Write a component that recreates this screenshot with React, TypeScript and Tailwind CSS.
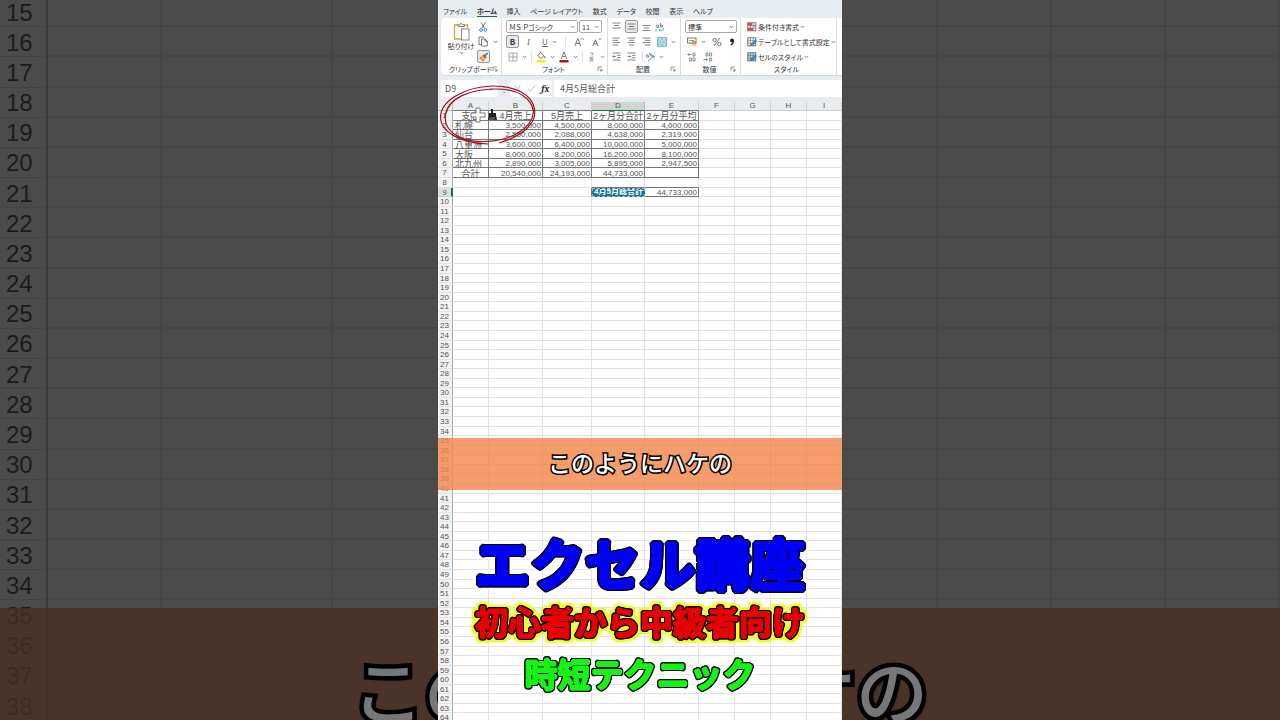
import type { ReactNode } from "react";

const GRID_COLS =
  "grid grid-cols-[15fr_36fr_54fr_49fr_53fr_54fr_36fr_36fr_36fr_35fr]";
const BACK_COLS =
  "grid grid-cols-[48fr_114fr_171fr_153fr_168fr_170fr_114fr_114fr_114fr_114fr]";

const COLUMNS = ["A", "B", "C", "D", "E", "F", "G", "H", "I"];

const DATA: Record<number, string[]> = {
  1: ["支店", "4月売上", "5月売上", "2ヶ月分合計", "2ヶ月分平均"],
  2: ["札幌", "3,500,000", "4,500,000", "8,000,000", "4,000,000"],
  3: ["仙台", "2,550,000", "2,088,000", "4,638,000", "2,319,000"],
  4: ["八重洲", "3,600,000", "6,400,000", "10,000,000", "5,000,000"],
  5: ["大阪", "8,000,000", "8,200,000", "16,200,000", "8,100,000"],
  6: ["北九州", "2,890,000", "3,005,000", "5,895,000", "2,947,500"],
  7: ["合計", "20,540,000", "24,193,000", "44,733,000", ""],
  9: ["", "", "", "4月5月総合計", "44,733,000"],
};

const TABS = ["ファイル", "ホーム", "挿入", "ページ レイアウト", "数式", "データ", "校閲", "表示", "ヘルプ"];

function range(from: number, count: number) {
  return Array.from({ length: count }, (_, i) => from + i);
}

function boxed(row: number, col: number) {
  return (row >= 1 && row <= 7 && col <= 4) || (row === 9 && (col === 3 || col === 4));
}

function cellBorder(row: number, col: number) {
  const right = boxed(row, col) || (row === 9 && col === 2);
  const bottom = boxed(row, col) || boxed(row + 1, col);
  return (
    (right ? "border-r-[#777] " : "border-r-[#e2e2e2] ") +
    (bottom ? "border-b-[#777]" : "border-b-[#e2e2e2]")
  );
}

function cellText(row: number, col: number) {
  if (row === 1 || (row === 7 && col === 0)) return "justify-center text-[9px]";
  if (col === 0) return "justify-start pl-0.5 text-[9px]";
  return "justify-end pr-px text-[8px]";
}

function Svg({ w, h, children }: { w: number; h: number; children: ReactNode }) {
  return (
    <svg width={w} height={h} viewBox={`0 0 ${w} ${h}`} fill="none" stroke="#666" strokeWidth="0.9" aria-hidden="true" className="shrink-0">
      {children}
    </svg>
  );
}

function Chevron() {
  return (
    <Svg w={5} h={4}>
      <path d="M0.8 1 L2.5 2.8 L4.2 1" strokeWidth="0.8" />
    </Svg>
  );
}

function Tool({ label, active, children }: { label: string; active?: boolean; children: ReactNode }) {
  return (
    <button
      type="button"
      aria-label={label}
      className={
        active
          ? "flex h-[13px] w-[13px] shrink-0 items-center justify-center rounded-xs border border-[#999] bg-[#e8e8e8]"
          : "flex h-[13px] shrink-0 items-center justify-center gap-1"
      }
    >
      {children}
    </button>
  );
}

function Divider() {
  return <span className="h-[10px] w-px shrink-0 bg-[#ddd]" />;
}

function Group({ label, width, launcher, children }: { label: string; width: string; launcher?: boolean; children: ReactNode }) {
  return (
    <section className={`${width} flex shrink-0 flex-col border-r border-[#ddd]`} aria-label={label}>
      <div className="h-[46px]">{children}</div>
      <div className="flex h-[10px] items-center pr-1 pl-2">
        <span className="flex-1 text-center text-[7px] leading-[10px] whitespace-nowrap">{label}</span>
        {launcher ? (
          <button type="button" aria-label={`${label}の設定`}>
            <Svg w={6} h={6}>
              <path d="M1 5 V1 H5 M2.5 2.5 L5 5 M5 3 V5 H3" strokeWidth="0.7" />
            </Svg>
          </button>
        ) : (
          <span className="w-2" />
        )}
      </div>
    </section>
  );
}

function Lines({ d }: { d: string }) {
  return (
    <Svg w={9} h={9}>
      <path d={d} strokeWidth="0.8" />
    </Svg>
  );
}

function ClipboardGroup() {
  return (
    <Group label="クリップボード" width="w-[61px]" launcher>
      <div className="flex h-full pl-2">
        <button type="button" className="flex w-[24px] flex-col items-center pt-1 text-[7px] leading-[10px] whitespace-nowrap">
          <Svg w={17} h={19}>
            <path d="M5 3 H1.5 V17 H9 M12 3 H14.5 V6" stroke="#d9a53a" strokeWidth="1.3" />
            <path d="M5 4.5 V2.5 H6.5 Q8 0 9.5 2.5 H11.5 V4.5 Z" stroke="#777" fill="#eee" />
            <rect x="8.5" y="7" width="7.5" height="11" fill="#fff" stroke="#777" />
          </Svg>
          <span>貼り付け</span>
          <Chevron />
        </button>
        <div className="flex flex-1 flex-col items-start gap-0.5 pt-0.5 pl-1">
          <Tool label="切り取り">
            <Svg w={12} h={10}>
              <path d="M4 0.5 L7.6 6.5 M8.4 0.5 L4.8 6.5" />
              <circle cx="4" cy="8" r="1.4" stroke="#2b7fc0" />
              <circle cx="8.4" cy="8" r="1.4" stroke="#2b7fc0" />
            </Svg>
          </Tool>
          <Tool label="コピー">
            <Svg w={12} h={11}>
              <path d="M4 8.5 H2 V1 H6 L7 2" />
              <path d="M4.5 3 H8 L10.3 5.2 V10 H4.5 Z M8 3 V5.2 H10.3" />
            </Svg>
            <Chevron />
          </Tool>
          <Tool label="書式のコピー/貼り付け" active>
            <Svg w={10} h={10}>
              <path d="M6 3.6 L8.8 0.9 M4.3 2.8 L7.2 5.7" strokeWidth="1.4" />
              <path d="M3.8 3.8 L6.2 6.2 L4 9.2 L0.8 6 Z" fill="#f4b84a" stroke="#a36a1c" strokeWidth="0.7" />
            </Svg>
          </Tool>
        </div>
      </div>
    </Group>
  );
}

function Picker({ label, value, width }: { label: string; value: string; width: string }) {
  return (
    <span className={`${width} relative flex h-[13px] items-center rounded-xs border border-[#aaa] bg-white`}>
      <select aria-label={label} defaultValue={value} className="h-full w-full appearance-none pl-0.5 text-[7px] leading-[10px]">
        <option>{value}</option>
      </select>
      <span className="pointer-events-none absolute right-0.5">
        <Chevron />
      </span>
    </span>
  );
}

function FontGroup() {
  return (
    <Group label="フォント" width="w-[106px]" launcher>
      <div className="flex h-full flex-col gap-0.5 pt-0.5 pl-1">
        <div className="flex gap-px">
          <Picker label="フォント名" value="ＭＳ Ｐゴシック" width="w-[72px]" />
          <Picker label="フォント サイズ" value="11" width="w-[23px]" />
        </div>
        <div className="flex items-center gap-2">
          <Tool label="太字" active>
            <b className="text-[8px] leading-[10px]">B</b>
          </Tool>
          <Tool label="斜体">
            <i className="font-serif text-[9px] leading-[10px] text-[#666]">I</i>
          </Tool>
          <Tool label="下線">
            <u className="pl-1 text-[8px] leading-[10px] text-[#666]">U</u>
            <Chevron />
          </Tool>
          <Divider />
          <Tool label="フォント サイズの拡大">
            <Svg w={10} h={10}>
              <path d="M0.8 9 L3.8 1.5 L6.8 9 M1.9 6.3 H5.7 M7 2.6 L8.3 1.2 L9.6 2.6" />
            </Svg>
          </Tool>
          <Tool label="フォント サイズの縮小">
            <Svg w={10} h={10}>
              <path d="M0.8 9 L3.4 2.8 L6 9 M1.8 6.8 H5 M6.8 1.4 L8 2.6 L9.2 1.4" />
            </Svg>
          </Tool>
        </div>
        <div className="flex items-center gap-1 pl-0.5">
          <Tool label="罫線">
            <Svg w={10} h={10}>
              <path d="M1 1 H9 V9 H1 Z M5 1 V9 M1 5 H9" stroke="#888" strokeWidth="0.7" />
            </Svg>
            <Chevron />
          </Tool>
          <Divider />
          <Tool label="塗りつぶしの色">
            <Svg w={10} h={12}>
              <path d="M4.6 1.5 L8 4.8 L4.8 7.6 L1.8 4.6 Z M4.6 1.5 V0.4" />
              <path d="M8.8 5 Q9.9 7 8.8 7.2 Q7.8 7 8.8 5" fill="#2b7fc0" stroke="#2b7fc0" strokeWidth="0.5" />
              <path d="M0.5 10.3 H9.5" stroke="#ffeb00" strokeWidth="2.4" />
            </Svg>
            <Chevron />
          </Tool>
          <Tool label="フォントの色">
            <Svg w={10} h={12}>
              <path d="M2.2 8 L5 1 L7.8 8 M3.2 5.6 H6.8" />
              <path d="M0.5 10.3 H9.5" stroke="#c00018" strokeWidth="2.4" />
            </Svg>
            <Chevron />
          </Tool>
          <Divider />
          <Tool label="ふりがな">
            <Svg w={9} h={10}>
              <path d="M3 1.2 H6 L4.8 3.6 M2.5 5.2 H6.5 M2.5 9 H6.5 M3.3 6.4 H5.7 V7.8 H3.3 Z" stroke="#777" strokeWidth="0.7" />
            </Svg>
            <Chevron />
          </Tool>
        </div>
      </div>
    </Group>
  );
}

function AlignGroup() {
  return (
    <Group label="配置" width="w-[73px]" launcher>
      <div className="flex h-full flex-col gap-0.5 pt-0.5 pl-1">
        <div className="flex items-center gap-1">
          <Tool label="上揃え"><Lines d="M0.5 1 H8.5 M2 3.5 H7 M0.5 6 H8.5" /></Tool>
          <Tool label="上下中央揃え" active><Lines d="M0.5 2 H8.5 M2 4.5 H7 M0.5 7 H8.5" /></Tool>
          <Tool label="下揃え"><Lines d="M0.5 3.5 H8.5 M2 6 H7 M0.5 8.5 H8.5" /></Tool>
          <Tool label="折り返して全体を表示する">
            <Svg w={10} h={10}>
              <path d="M1 4.5 Q2 2 3.5 3.2 V5.5 Q1 6 1.2 4.3 M5.5 1 V5 Q8 5.8 7.6 3.8 Q7 2.4 5.5 3.3" strokeWidth="0.8" />
              <path d="M8 6 Q9.5 8.5 6 8.2 H4 M5.3 7 L4 8.2 L5.3 9.4 M1 7 V9.5" stroke="#3592b0" strokeWidth="0.8" />
            </Svg>
          </Tool>
        </div>
        <div className="flex items-center gap-1.5">
          <Tool label="左揃え"><Lines d="M0.5 1 H8 M0.5 3.3 H6 M0.5 5.6 H8 M0.5 8 H6" /></Tool>
          <Tool label="中央揃え"><Lines d="M0.5 1 H8.5 M2 3.3 H7 M0.5 5.6 H8.5 M2 8 H7" /></Tool>
          <Tool label="右揃え"><Lines d="M0.5 1 H8.5 M2.5 3.3 H8.5 M0.5 5.6 H8.5 M2.5 8 H8.5" /></Tool>
          <Tool label="セルを結合して中央揃え">
            <Svg w={10} h={10}>
              <rect x="0.8" y="0.8" width="8.4" height="8.4" stroke="#3592b0" />
              <path d="M5 0.8 V2.8 M5 7.2 V9.2 M0.8 3 H9.2 M0.8 7 H9.2 M2.5 5 H7.5 M3.5 4.2 L2.5 5 L3.5 5.8 M6.5 4.2 L7.5 5 L6.5 5.8" stroke="#3592b0" strokeWidth="0.7" />
            </Svg>
            <Chevron />
          </Tool>
        </div>
        <div className="flex items-center gap-1.5">
          <Tool label="インデントを減らす">
            <Svg w={9} h={9}>
              <path d="M0.5 1 H8.5 M5 3.3 H8.5 M5 5.6 H8.5 M0.5 8 H8.5" strokeWidth="0.8" />
              <path d="M4 4.5 H0.6 M1.8 3.3 L0.6 4.5 L1.8 5.7" stroke="#3592b0" />
            </Svg>
          </Tool>
          <Tool label="インデントを増やす">
            <Svg w={9} h={9}>
              <path d="M0.5 1 H8.5 M5 3.3 H8.5 M5 5.6 H8.5 M0.5 8 H8.5" strokeWidth="0.8" />
              <path d="M0.4 4.5 H3.8 M2.6 3.3 L3.8 4.5 L2.6 5.7" stroke="#3592b0" />
            </Svg>
          </Tool>
          <span className="flex items-center gap-0.5">
            <Divider />
            <Tool label="方向">
              <Svg w={10} h={10}>
                <path d="M1 4 Q1.5 2 3 3 L4 5 Q2 6.4 1 4 M4 1 L6.4 4.4 Q7.8 3 6.4 2 L5 2.4" strokeWidth="0.8" />
                <path d="M3 9 L9 4 M9 6.2 V4 H6.8" stroke="#3592b0" />
              </Svg>
              <Chevron />
            </Tool>
          </span>
        </div>
      </div>
    </Group>
  );
}

function NumberGroup() {
  return (
    <Group label="数値" width="w-[60px]" launcher>
      <div className="flex h-full flex-col gap-0.5 pt-0.5 pl-1">
        <Picker label="表示形式" value="標準" width="w-[52px]" />
        <div className="flex items-center gap-1.5 pl-0.5">
          <Tool label="通貨表示形式">
            <Svg w={10} h={9}>
              <rect x="0.6" y="1" width="8.4" height="5" />
              <path d="M2 3.5 H7" strokeWidth="0.7" />
              <path d="M5.2 4.6 H9.4 M5.2 6.3 H9.4 M5.2 8 H9.4" stroke="#dd9426" strokeWidth="1.2" />
            </Svg>
            <Chevron />
          </Tool>
          <Tool label="パーセント スタイル">
            <Svg w={10} h={10}>
              <circle cx="2.6" cy="3" r="1.7" />
              <circle cx="7.4" cy="7" r="1.7" />
              <path d="M8 1 L2 9" />
            </Svg>
          </Tool>
          <Tool label="桁区切りスタイル">
            <Svg w={9} h={10}>
              <circle cx="4" cy="3.4" r="2" fill="#222" stroke="none" />
              <path d="M5.5 3.4 Q5.6 6.6 2.6 8" stroke="#222" strokeWidth="1.3" />
            </Svg>
          </Tool>
        </div>
        <div className="flex items-center gap-1.5 pl-0.5">
          <Tool label="小数点以下の表示桁数を増やす">
            <Svg w={10} h={10}>
              <path d="M4.3 2.5 H0.8 M2 1.3 L0.8 2.5 L2 3.7" stroke="#3592b0" />
              <path d="M6 1 h2 v3 h-2 z M6 6 h2 v3 h-2 z M2.5 6 h2 v3 h-2 z" strokeWidth="0.7" />
            </Svg>
          </Tool>
          <Tool label="小数点以下の表示桁数を減らす">
            <Svg w={10} h={10}>
              <path d="M0.5 7.5 H4.4 M3.2 6.3 L4.4 7.5 L3.2 8.7" stroke="#3592b0" />
              <path d="M3 1 h2 v3 h-2 z M6.6 1 h2 v3 h-2 z M6.6 6 h2 v3 h-2 z" strokeWidth="0.7" />
            </Svg>
          </Tool>
        </div>
      </div>
    </Group>
  );
}

function StyleIcon({ kind }: { kind: number }) {
  return (
    <Svg w={10} h={10}>
      <rect x="0.8" y="0.8" width="8" height="8" fill={kind === 2 ? "#b7d6ea" : "#fff"} />
      <path d="M0.8 3.4 H8.8 M0.8 6.1 H8.8 M3.4 0.8 V8.8 M6.1 0.8 V8.8" strokeWidth="0.6" />
      {kind === 0 ? (
        <>
          <rect x="1" y="1" width="4" height="2.6" fill="#d24a55" stroke="none" />
          <rect x="1" y="6" width="5" height="2.6" fill="#d24a55" stroke="none" />
          <path d="M6.4 3.8 H8" stroke="#d24a55" strokeWidth="1.2" />
        </>
      ) : (
        <path d="M3.6 8.8 L5 6.4 L9 2.6 M3.6 8.8 L6.4 7.6 L9.4 3.6" stroke="#2b7fc0" strokeWidth="1.2" />
      )}
    </Svg>
  );
}

function StylesGroup() {
  return (
    <Group label="スタイル" width="w-[96px]">
      <div className="flex h-full flex-col gap-px pt-0.5 pl-1.5 text-[7px] leading-[10px] whitespace-nowrap">
        {["条件付き書式", "テーブルとして書式設定", "セルのスタイル"].map((text, i) => (
          <button key={text} type="button" className="flex h-[14px] items-center gap-px">
            <StyleIcon kind={i} />
            <span>{text}</span>
            <Chevron />
          </button>
        ))}
      </div>
    </Group>
  );
}

function Ribbon() {
  return (
    <header className="shrink-0 overflow-hidden bg-[#e6ecef] text-[#333] [font-feature-settings:'palt']">
      <nav aria-label="リボン" className="flex h-[18px] items-center justify-between pt-1 pr-[129px] pl-[5px] text-[7px] leading-[10px] whitespace-nowrap">
        {TABS.map((tab) => (
          <a key={tab} href="#ribbon" className={tab === "ホーム" ? "border-b border-[#17713f] font-bold" : "border-b border-transparent"}>
            {tab}
          </a>
        ))}
      </nav>
      <div id="ribbon" className="ml-[3px] flex h-[57px] rounded-l-sm bg-white shadow-[0_1px_1px_#cfd5d8]">
        <ClipboardGroup />
        <FontGroup />
        <AlignGroup />
        <NumberGroup />
        <StylesGroup />
      </div>
      <div className="mt-[5px] ml-[3px] flex h-[17px] items-stretch">
        <div className="flex w-[57px] items-center justify-between rounded-xs bg-white pr-1">
          <input aria-label="名前ボックス" defaultValue="D9" className="w-8 pl-1 text-[9px] leading-3 text-[#555]" />
          <Chevron />
        </div>
        <span className="flex w-3 items-center justify-center text-[8px]">⋮</span>
        <div className="mr-0.5 flex w-[42px] items-center justify-around rounded-xs bg-white">
          <button type="button" aria-label="キャンセル">
            <Svg w={9} h={9}><path d="M1.5 1.5 L7.5 7.5 M7.5 1.5 L1.5 7.5" stroke="#bbb" /></Svg>
          </button>
          <button type="button" aria-label="入力">
            <Svg w={9} h={9}><path d="M1 5 L3.5 7.5 L8.2 1.5" stroke="#bbb" /></Svg>
          </button>
          <button type="button" aria-label="関数の挿入" className="font-serif text-[10px] leading-3 font-bold italic">fx</button>
        </div>
        <input
          aria-label="数式バー"
          defaultValue="4月5月総合計"
          className="min-w-0 flex-1 bg-white pl-1.5 text-[9px] leading-3 text-[#555]"
        />
      </div>
      <div className="h-[5px]" />
    </header>
  );
}

function Sheet() {
  return (
    <table className="-mb-[3px] flex min-h-0 flex-1 flex-col bg-white font-['Liberation_Sans','Noto_Sans_CJK_JP',sans-serif] text-[#555]">
      <thead className="block shrink-0">
        <tr className={`${GRID_COLS} h-[9px] bg-[#eaedee] text-[8px] leading-[8px]`}>
          <th className="border-r border-b border-[#bbb]" aria-label="すべて選択" />
          {COLUMNS.map((name, i) => (
            <th
              key={name}
              scope="col"
              className={
                i === 3
                  ? "border-r border-b border-r-[#bbb] border-b-[#17713f] bg-[#d0d4d4] font-normal text-[#25704a]"
                  : i < 5
                    ? "border-r border-b border-r-[#d0d0d0] border-b-[#777] font-normal"
                    : "border-r border-b border-[#d0d0d0] font-normal"
              }
            >
              {name}
            </th>
          ))}
        </tr>
      </thead>
      <tbody className="flex min-h-0 flex-1 flex-col">
        {range(1, 64).map((row) => (
          <tr key={row} className={`${GRID_COLS} min-h-0 flex-1`}>
            <th
              scope="row"
              className={
                row === 9
                  ? "min-h-0 border-r-2 border-b border-r-[#17713f] border-b-[#ccc] bg-[#dcdedd] text-[8px] leading-[9px] font-normal text-[#25704a]"
                  : "min-h-0 border-r border-b border-r-[#aaa] border-b-[#e2e2e2] bg-[#f3f3f3] pr-px text-[8px] leading-[9px] font-normal"
              }
            >
              {row}
            </th>
            {COLUMNS.map((name, col) =>
              row === 9 && col === 3 ? (
                <td
                  key={name}
                  className="flex min-h-0 min-w-0 items-center justify-center overflow-hidden border border-dashed border-[#8fc7ae] bg-[#17739b] text-[8px] leading-[8px] font-bold whitespace-nowrap text-white"
                >
                  {DATA[9][3]}
                </td>
              ) : (
                <td
                  key={name}
                  className={`${cellBorder(row, col)} ${cellText(row, col)} flex min-h-0 min-w-0 items-center border-r border-b pt-0.5 leading-[8px] whitespace-nowrap`}
                >
                  {DATA[row]?.[col] ?? ""}
                </td>
              ),
            )}
          </tr>
        ))}
      </tbody>
    </table>
  );
}

function CursorAndMark() {
  return (
    <svg viewBox="0 0 104 66" fill="none" aria-hidden="true" className="absolute top-[82px] left-0 w-[104px]">
      <path d="M38 26 h4 v5 h5 v4 h-5 v5 h-4 v-5 h-5 v-4 h5 z" fill="#fff" stroke="#666" strokeWidth="0.9" />
      <path d="M53 27 h2 v4 h3 v2 l1 5 h-9 l1 -5 v-2 h2 z" fill="#222" />
      <path d="M52 38 v-2 M54 38 v-3 M56 38 v-3" stroke="#eee" strokeWidth="0.5" />
      <path
        d="M50 62 C22 61 3 50 2.500 36 C2 19 26 5 54 4 C78 3.500 94 13 96.500 27 C99 42 84 54 61 61"
        stroke="#9c1017"
        strokeWidth="1.2"
      />
      <path
        d="M95.500 30 C94 16 80 7 58 7 C32 7 10 16 7.500 33 C5 49 22 60 46 59.500 C74 59 94 46 95.500 30"
        stroke="#9c1017"
        strokeWidth="1.2"
      />
    </svg>
  );
}

function Backdrop() {
  return (
    <div aria-hidden="true" className="absolute inset-0 overflow-hidden bg-[#4b4b4b] font-['Liberation_Sans',sans-serif]">
      <div className="-mt-[3px] flex h-[calc(100%+4px)] flex-col">
        {range(15, 24).map((row) => (
          <div key={row} className={`${BACK_COLS} min-h-0 flex-1`}>
            <span className="flex min-h-0 items-center border-r-2 border-b border-r-[#3b3b3b] border-b-[#434343] pt-0.5 pl-1.5 text-2xl leading-6 text-[#1c1c1c]">
              {row}
            </span>
            {COLUMNS.map((name) => (
              <span key={name} className="border-r-2 border-b-2 border-[#454545]" />
            ))}
          </div>
        ))}
      </div>
      <div className="absolute inset-x-0 top-[608px] bottom-0 bg-[#4a2e20]/80">
        <p className="pt-[44px] text-center font-['Noto_Sans_CJK_JP',sans-serif] text-[72px] leading-[72px] font-medium whitespace-nowrap text-[#777] [paint-order:stroke_fill] [-webkit-text-stroke:9px_black] [text-shadow:3px_4px_3px_#0008]">
          このようにハケの
        </p>
      </div>
    </div>
  );
}

const ROUND_2 =
  "[text-shadow:2px_0_currentColor,-2px_0_currentColor,0_2px_currentColor,0_-2px_currentColor,1px_1px_currentColor,-1px_1px_currentColor,1px_-1px_currentColor,-1px_-1px_currentColor]";
const ROUND_1 =
  "[text-shadow:1px_0_currentColor,-1px_0_currentColor,0_1px_currentColor,0_-1px_currentColor]";

export default function App() {
  return (
    <main className="relative flex h-screen justify-center overflow-hidden font-['Noto_Sans_CJK_JP',sans-serif]">
      <Backdrop />
      <div className="relative flex aspect-[404/720] h-full flex-col overflow-hidden bg-white">
        <Ribbon />
        <Sheet />
        <CursorAndMark />
        <p className="absolute inset-x-0 top-[438px] h-[52px] bg-[#f28547]/80 text-center text-[23px] leading-[48px] font-medium text-white [paint-order:stroke_fill] [-webkit-text-stroke:3px_black] [text-shadow:1px_1px_1px_#000]">
          このようにハケの
        </p>
        <div className="absolute inset-x-0 top-[530px] flex flex-col items-center whitespace-nowrap">
          <h1
            className={`${ROUND_2} text-[55px] leading-[62px] font-bold text-[#0000f5] [filter:drop-shadow(1px_0_black)_drop-shadow(-1px_0_black)_drop-shadow(0_1px_black)_drop-shadow(0_-1px_black)_drop-shadow(0_0_2px_white)_drop-shadow(0_0_2px_white)]`}
          >
            エクセル講座
          </h1>
          <h2
            className={`${ROUND_1} text-[33px] leading-[58px] font-bold text-[#e60000] [filter:drop-shadow(1px_0_black)_drop-shadow(-1px_0_black)_drop-shadow(0_1px_black)_drop-shadow(0_-1px_black)_drop-shadow(2px_0_#eaff2b)_drop-shadow(-2px_0_#eaff2b)_drop-shadow(0_2px_#eaff2b)_drop-shadow(0_-2px_#eaff2b)_drop-shadow(0_0_1px_#eaff2b)]`}
          >
            初心者から中級者向け
          </h2>
          <p
            className={`${ROUND_1} text-[33px] leading-[46px] font-bold text-[#14f514] [filter:drop-shadow(1px_0_black)_drop-shadow(-1px_0_black)_drop-shadow(0_1px_black)_drop-shadow(0_-1px_black)_drop-shadow(0_0_2px_white)_drop-shadow(0_0_2px_white)]`}
          >
            時短テクニック
          </p>
        </div>
      </div>
    </main>
  );
}
